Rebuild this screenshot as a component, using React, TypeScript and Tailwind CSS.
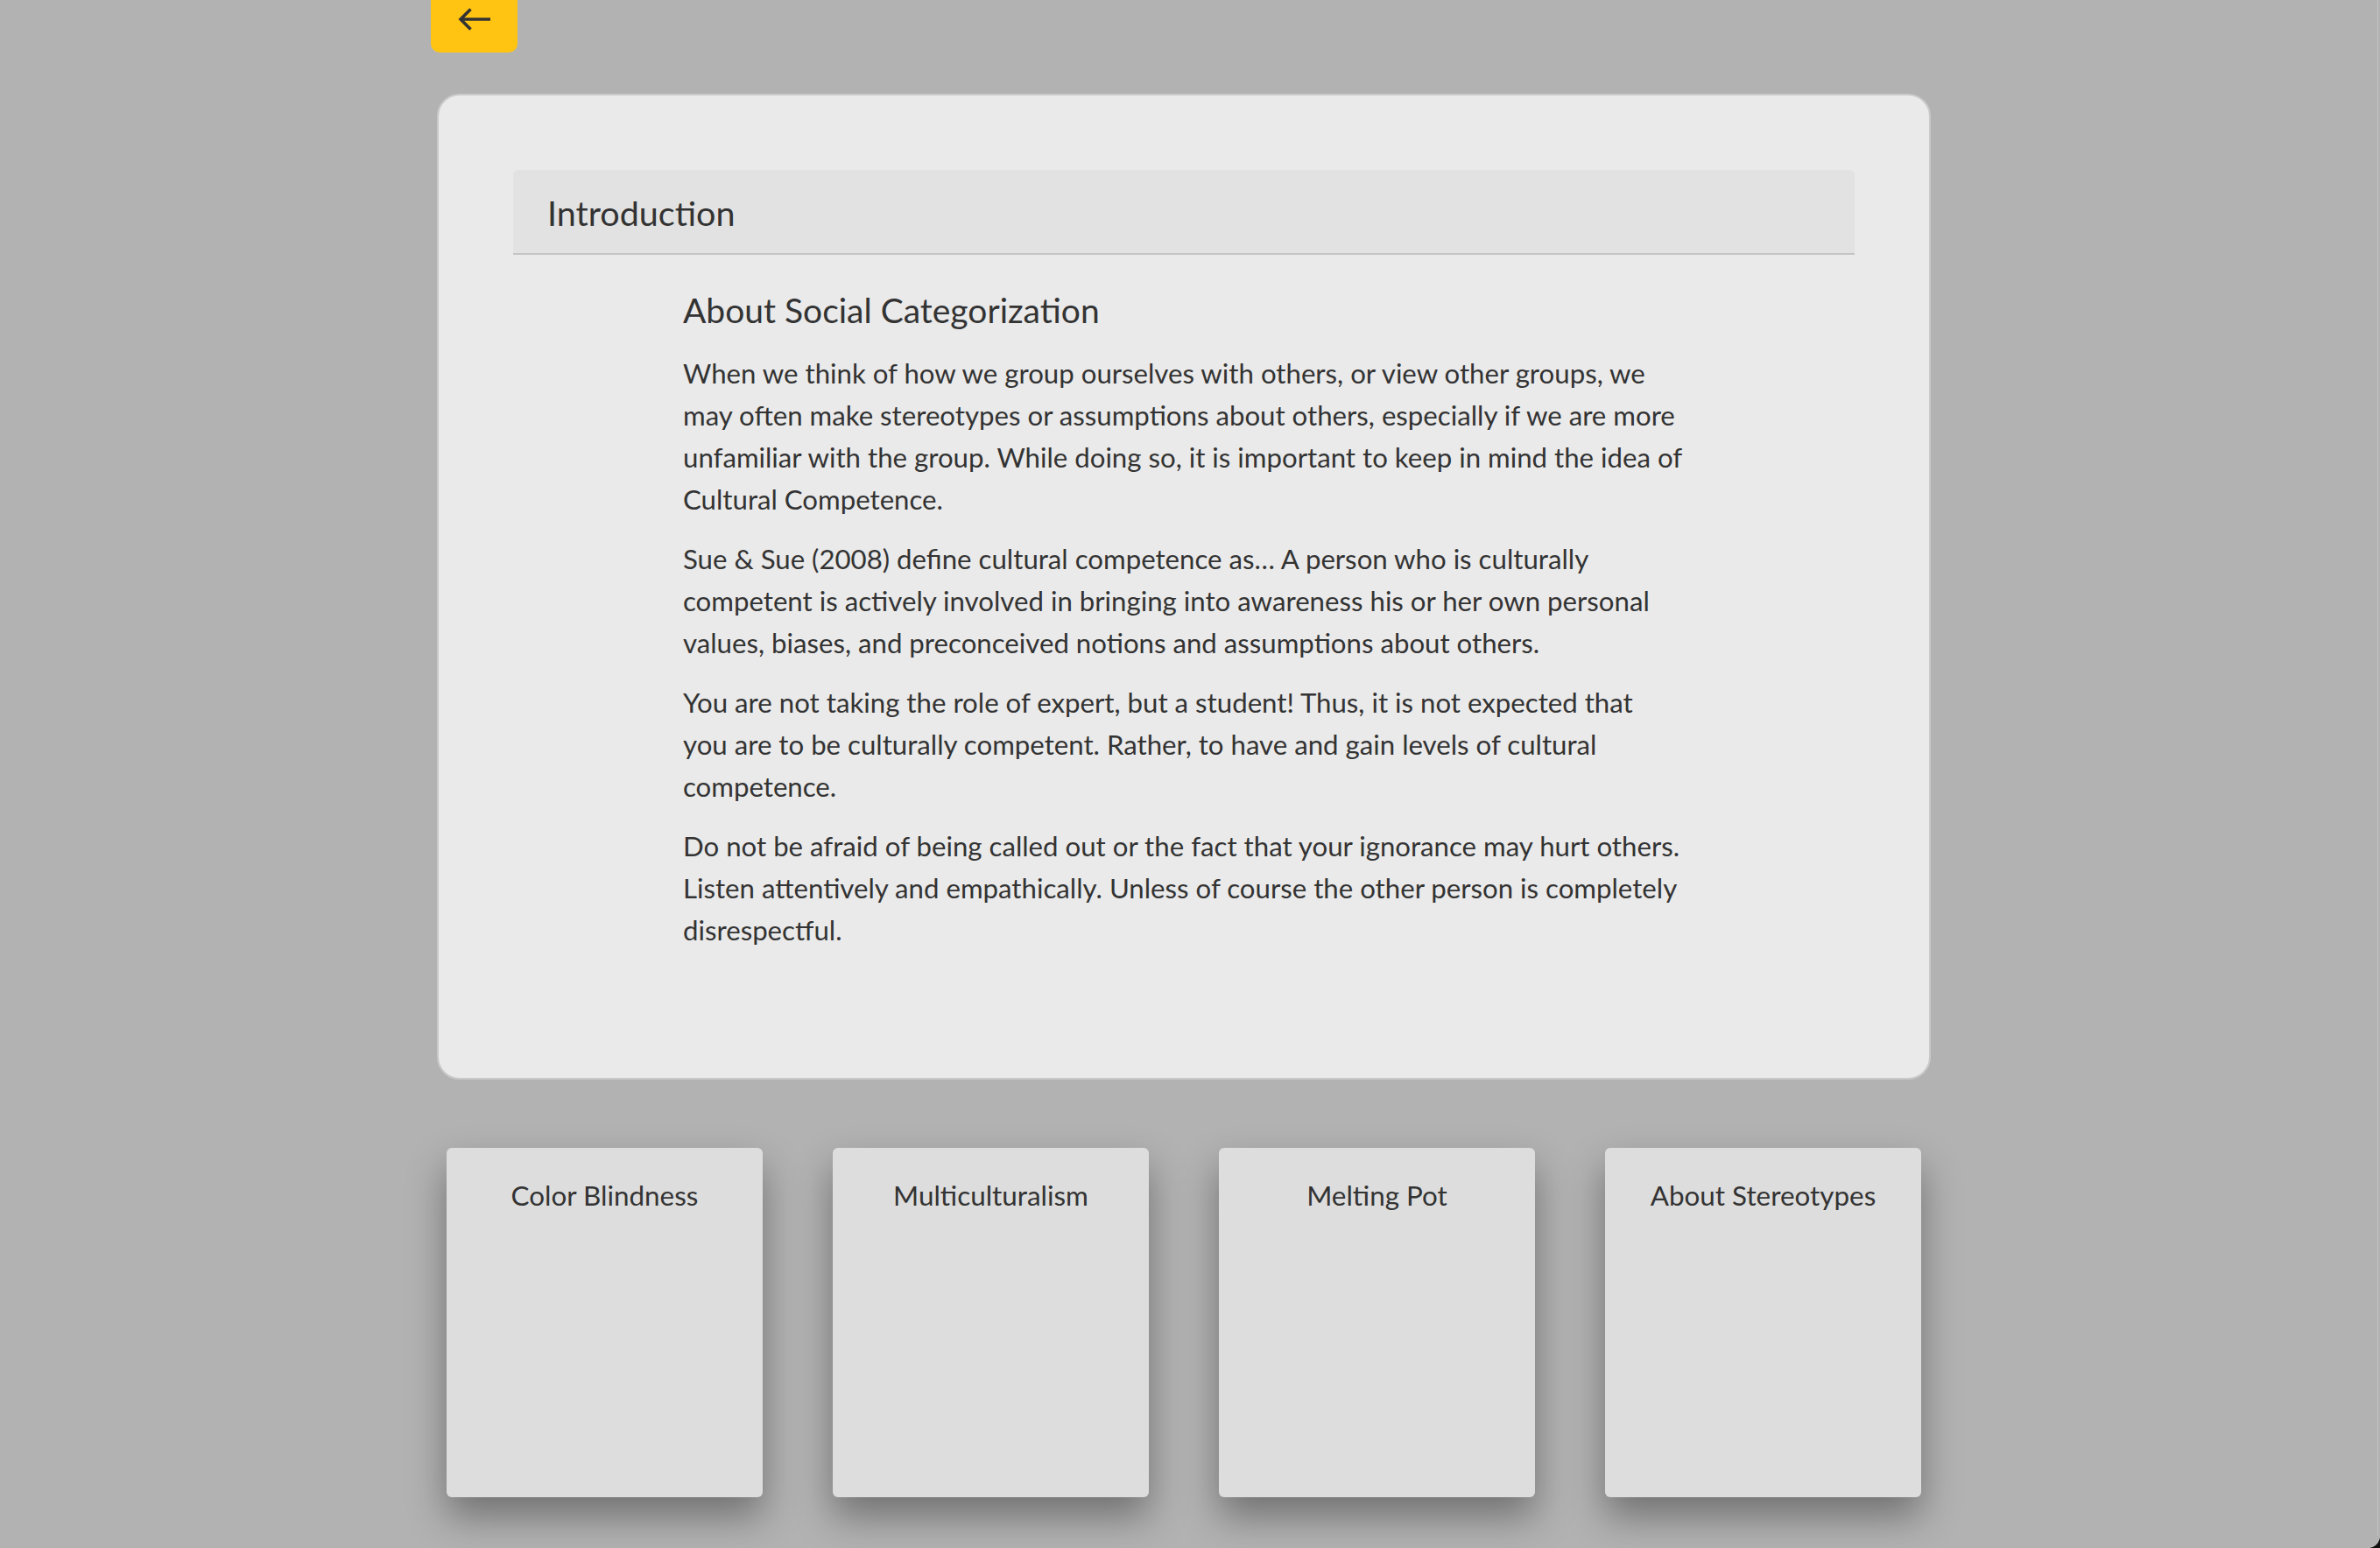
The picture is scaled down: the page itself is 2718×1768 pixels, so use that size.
import React from "react";

const paragraphs: React.ReactNode[] = [
  "When we think of how we group ourselves with others, or view other groups, we may often make stereotypes or assumptions about others, especially if we are more unfamiliar with the group. While doing so, it is important to keep in mind the idea of Cultural Competence.",
  "Sue & Sue (2008) define cultural competence as… A person who is culturally competent is actively involved in bringing into awareness his or her own personal values, biases, and preconceived notions and assumptions about others.",
  <>
    You are not taking the role of expert, but a student! Thus, it is not expected that
    <br />
    you are to be culturally competent. Rather, to have and gain levels of cultural competence.
  </>,
  "Do not be afraid of being called out or the fact that your ignorance may hurt others. Listen attentively and empathically. Unless of course the other person is completely disrespectful.",
];

const topics = ["Color Blindness", "Multiculturalism", "Melting Pot", "About Stereotypes"];

function BackArrow() {
  return (
    <svg width="40" height="28" viewBox="0 0 40 28" fill="none">
      <path d="M38 14H4" stroke="#333333" strokeWidth="3.6" />
      <path d="M15.5 2.5L4 14l11.5 11.5" stroke="#333333" strokeWidth="3.6" strokeLinejoin="miter" />
    </svg>
  );
}

export default function App() {
  return (
    <div className="relative h-[1768px] w-full overflow-hidden bg-[#b2b2b2] pr-[14px] font-[Lato,sans-serif] text-[#333333]">
      <div className="mx-auto flex w-[1706px] flex-col">
        <button className="-ml-[7px] flex h-[60px] w-[99px] items-center justify-center rounded-b-[10px] bg-[#ffc412] pb-[16px]">
          <BackArrow />
        </button>

        <div className="mt-[47px] rounded-[26px] border-2 border-[#c9c9c9] bg-[#eaeaea] p-[85px]">
          <div className="flex h-[97px] items-center rounded-t-[6px] border-b-2 border-[#c4c4c4] bg-[#e2e2e2] pl-[39px]">
            <h1 className="pt-[2px] text-[39.5px] font-normal leading-none">Introduction</h1>
          </div>

          <div className="mx-auto w-[1144px] pb-[40px] pt-[39px]">
            <h2 className="mb-[24px] text-[39px] font-normal leading-[48px]">About Social Categorization</h2>
            {paragraphs.map((p, i) => (
              <p key={i} className="mb-[20px] text-[31.2px] leading-[48px]">
                {p}
              </p>
            ))}
          </div>
        </div>

        <div className="mt-[78px] flex justify-center gap-[80px]">
          {topics.map((t) => (
            <div
              key={t}
              className="h-[399px] w-[361px] rounded-[6px] bg-[#dddddd] pt-[30px] text-center shadow-[0_22px_44px_rgba(0,0,0,0.36)]"
            >
              <span className="text-[31.4px] leading-[48px]">{t}</span>
            </div>
          ))}
        </div>
      </div>

      <div className="absolute right-0 top-0 h-full w-[3px] border-l border-[#c2c2c2]" />
      <div className="absolute bottom-0 right-0 h-[14px] w-[14px] bg-[#111111]">
        <div className="h-full w-full rounded-br-[14px] border-b border-r border-[#c2c2c2] bg-[#b2b2b2]" />
      </div>
    </div>
  );
}
